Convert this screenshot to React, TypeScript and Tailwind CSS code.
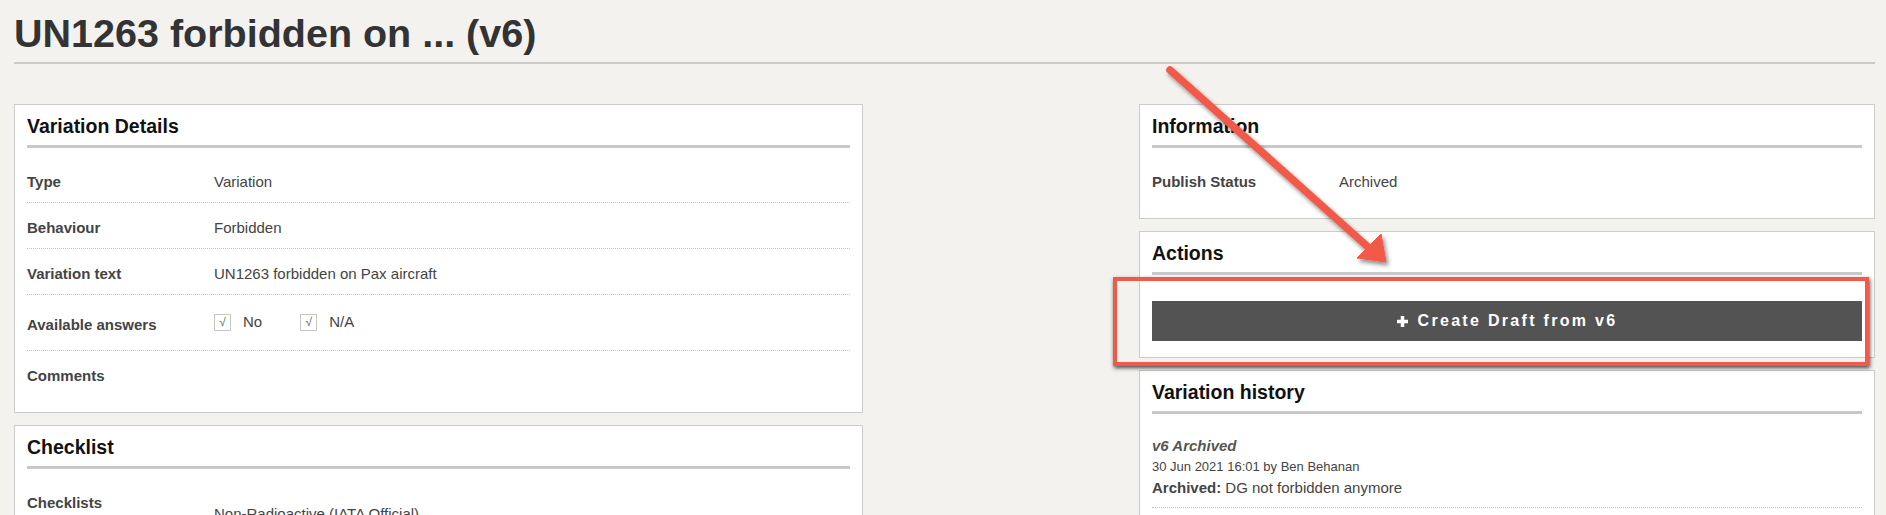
import type { ReactNode } from 'react';

const font = { fontFamily: '"Liberation Sans", Arial, sans-serif' };

/** Caja con título subrayado */
function Panel({ title, children, className = '' }: { title: string; children: ReactNode; className?: string }) {
  return (
    <section className={`border border-[#cccccc] bg-white px-3 pb-4 ${className}`}>
      <h3 className="border-b-[3px] border-[#c8c8c8] pb-2 pt-[10px] text-[19.5px] font-bold leading-[22px] text-[#111]">
        {title}
      </h3>
      <div className="pt-[9px]">{children}</div>
    </section>
  );
}

function Row({ label, children, last = false }: { label: string; children?: ReactNode; last?: boolean }) {
  return (
    <div
      className={`flex pb-[11px] pt-4 text-[15px] leading-[18px] ${last ? '' : 'border-b border-dotted border-[#c4c4c4]'}`}
    >
      <div className="w-[187px] shrink-0 font-bold text-[#444]">{label}</div>
      <div className="text-[#444]">{children}</div>
    </div>
  );
}

function Check({ label }: { label: string }) {
  return (
    <span className="flex items-center">
      <span className="flex h-[17px] w-[17px] items-center justify-center border border-[#c6c6c6] bg-white text-[12px] leading-none text-[#666]">
        √
      </span>
      <span className="ml-3">{label}</span>
    </span>
  );
}

function PlusIcon() {
  return (
    <svg width="11" height="11" viewBox="0 0 11 11" className="mr-[10px] shrink-0">
      <rect x="3.75" y="0" width="3.5" height="11" fill="#fff" />
      <rect x="0" y="3.75" width="11" height="3.5" fill="#fff" />
    </svg>
  );
}

export default function App() {
  return (
    <div className="relative min-h-screen overflow-hidden bg-[#f3f2ef] pl-[14px] pr-[11px] pt-[10px]" style={font}>
      <h1 className="border-b-2 border-[#cbcbcb] pb-[6px] text-[39.5px] font-bold leading-[46px] text-[#333]">
        UN1263 forbidden on ... (v6)
      </h1>

      <div className="mt-10 flex justify-between">
        {/* columna izquierda */}
        <div className="flex w-[849px] flex-col gap-3">
          <Panel title="Variation Details">
            <Row label="Type">Variation</Row>
            <Row label="Behaviour">Forbidden</Row>
            <Row label="Variation text">UN1263 forbidden on Pax aircraft</Row>
            <div className="flex border-b border-dotted border-[#c4c4c4] pb-[11px] pt-4 text-[15px] leading-[18px]">
              <div className="w-[187px] shrink-0 pt-[5px] font-bold text-[#444]">Available answers</div>
              <div className="flex h-[28px] items-start gap-[38px] pt-[2px] text-[#444]">
                <Check label="No" />
                <Check label="N/A" />
              </div>
            </div>
            <Row label="Comments" last />
          </Panel>

          <Panel title="Checklist">
            <div className="flex pb-[11px] pt-4 text-[15px] leading-[18px]">
              <div className="w-[187px] shrink-0 font-bold text-[#444]">Checklists</div>
              <div className="pt-[11px] text-[#444]">Non-Radioactive (IATA Official)</div>
            </div>
          </Panel>
        </div>

        {/* columna derecha */}
        <div className="flex w-[736px] flex-col gap-3">
          <Panel title="Information">
            <Row label="Publish Status" last>
              Archived
            </Row>
          </Panel>

          <Panel title="Actions">
            <div className="pt-[17px]">
              <button className="flex h-10 w-full items-center justify-center bg-[#535353] text-[16px] font-bold tracking-[2.3px] text-white">
                <PlusIcon />
                Create Draft from v6
              </button>
            </div>
          </Panel>

          <Panel title="Variation history">
            <div className="border-b border-dotted border-[#c4c4c4] pb-2 pt-[13px]">
              <div className="text-[15px] font-bold italic leading-[20px] text-[#555]">v6 Archived</div>
              <div className="mt-px text-[13px] leading-[20px] text-[#444]">30 Jun 2021 16:01 by Ben Behanan</div>
              <div className="text-[15px] leading-[22px] text-[#444]">
                <span className="font-bold">Archived:</span> DG not forbidden anymore
              </div>
            </div>
          </Panel>
        </div>
      </div>

      {/* anotación: recuadro rojo */}
      <div className="pointer-events-none absolute left-[1113px] top-[277px] h-[89px] w-[756px] border-4 border-[#f15a4a] shadow-[1px_2px_4px_rgba(0,0,0,0.7)]" />

      {/* anotación: flecha */}
      <svg className="pointer-events-none absolute left-0 top-0" width="1886" height="515">
        <defs>
          <filter id="sh" x="-20%" y="-20%" width="140%" height="140%">
            <feDropShadow dx="2" dy="3" stdDeviation="2" floodColor="#000" floodOpacity="0.45" />
          </filter>
        </defs>
        <g filter="url(#sh)" fill="#f15a4a" stroke="#f15a4a">
          <line x1="1170" y1="70" x2="1368" y2="247" strokeWidth="7.5" strokeLinecap="round" />
          <polygon points="1386,262 1357,258 1381,234" strokeWidth="1" strokeLinejoin="round" />
        </g>
      </svg>
    </div>
  );
}
